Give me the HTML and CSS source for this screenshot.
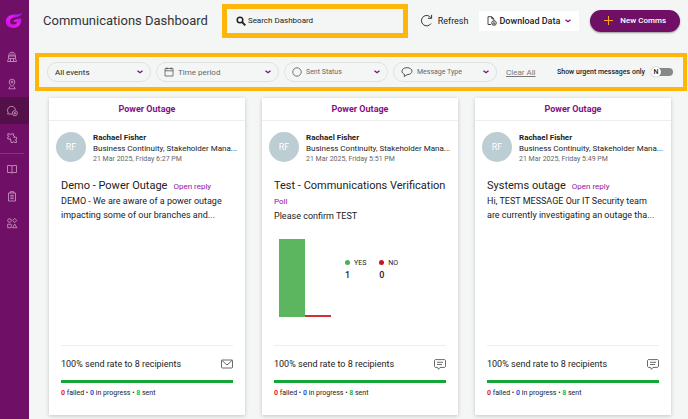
FILE: index.html
```html
<!DOCTYPE html>
<html lang="en">

<head>
  <meta charset="UTF-8" />
  <meta name="viewport" content="width=device-width, initial-scale=1.0" />
  <title>Communications Dashboard</title>
  <link rel="stylesheet" href="styles.css">
</head>

<body>
  <nav class="sidebar" aria-label="Main">
    <a class="logo" href="#" aria-label="Home">
      <svg width="18" height="18" viewBox="0 0 18 18">
        <defs>
          <linearGradient id="logoFill" x1="0" y1="1" x2="1" y2="0">
            <stop offset="0" stop-color="#c410dc" />
            <stop offset=".5" stop-color="#f016f6" />
            <stop offset="1" stop-color="#7a1bd0" />
          </linearGradient>
        </defs>
        <path fill="url(#logoFill)"
          d="M17 .800C16.800 3.600 15 4.800 11.500 5C7.500 5.200 5 7 5 9.500C5 11.500 6.500 12.600 8.500 12.600C10.500 12.600 11.800 11.600 12.200 10L8.300 9.800C9 7.800 11 6.800 16.500 6.600C16.500 12.500 13.500 16 8.500 16C4 16 .800 13.500 .800 9.800C.800 5.500 4 3 9 2.600C12 2.400 15 2.200 17 .800Z" />
      </svg>
    </a>
    <a class="nav-item" href="#" aria-label="Organisation">
      <svg viewBox="0 0 12 12"><path d="M3 5V3.500C3 .500 9 .500 9 3.500V5M2 5h8M3 7.500h6M1.500 10.500h9M2.500 5v2.500l-1 3M9.500 5v2.500l1 3M5 2.500v2.500M7 2.500v2.500M4.500 7.500v3M7.500 7.500v3" /></svg>
    </a>
    <a class="nav-item" href="#" aria-label="Locations">
      <svg viewBox="0 0 12 12"><path d="M6 8.500C4 6.500 3.200 5.300 3.200 4A2.800 2.800 0 0 1 8.800 4C8.800 5.300 8 6.500 6 8.500ZM4 8.500L2.800 10.800H9.200L8 8.500" /><circle cx="6" cy="4" r="1" /></svg>
    </a>
    <a class="nav-item active" href="#" aria-label="Communications">
      <svg viewBox="0 0 12 12"><path d="M6 9H1.500L2.200 7.600A4 4 0 1 1 9.500 5" /><circle cx="8.800" cy="8.200" r="2.500" /><path d="M8.800 7v2.400M7.600 8.200H10" /></svg>
    </a>
    <a class="nav-item" href="#" aria-label="Integrations">
      <svg viewBox="0 0 12 12"><path d="M1.800 1.800H4C3.700 3.200 5.800 3.200 5.500 1.800H7.500V4C8.900 3.700 8.900 5.500 7.700 5.300H10.500V7.300C9.100 7 9.100 9 10.500 8.700V10.500H8.500C8.800 9.200 6.800 9.200 7 10.500H5V8.300C3.700 8.600 3.700 6.800 5 7H1.800V5C3.200 5.300 3.200 3.500 1.800 3.800Z" /></svg>
    </a>
    <hr class="nav-divider">
    <a class="nav-item" href="#" aria-label="Guides">
      <svg viewBox="0 0 12 12"><path d="M1.500 2.500H5L6 3L7 2.500h3.500v7H7L6 10L5 9.500H1.500ZM6 3v7" /></svg>
    </a>
    <a class="nav-item" href="#" aria-label="Tasks">
      <svg viewBox="0 0 12 12"><path d="M2.500 3h7v8h-7ZM4.200 3V1.700h3.600V3M4.200 5.300h3.600M4.200 7h3.600M4.200 8.700h3.600" /></svg>
    </a>
    <a class="nav-item" href="#" aria-label="Categories">
      <svg viewBox="0 0 12 12"><circle cx="3.500" cy="3.500" r="1.800" /><path d="M8.700 1.300l2 2.200l-2 2.200l-2-2.200ZM1.700 7.200h3.500v3.500H1.700ZM8.700 7l2.200 3.700H6.500Z" /></svg>
    </a>
  </nav>

  <main class="main">
    <header class="topbar">
      <h1>Communications Dashboard</h1>
      <label class="search">
        <svg width="10" height="10" viewBox="0 0 10 10" fill="none" stroke="#222"><circle cx="4" cy="4" r="2.800" stroke-width="1.500" /><path d="M6 6l3.300 3.300" stroke-width="1.900" /></svg>
        <input type="text" placeholder="Search Dashboard" aria-label="Search Dashboard">
      </label>
      <button class="refresh" type="button">
        <svg width="13" height="13" viewBox="0 0 13 13" fill="none" stroke="#333"><path d="M11 9.500A5.200 5.200 0 1 1 11 3.800M11.600 .800V4.300H8" /></svg>
        Refresh
      </button>
      <button class="download" type="button">
        <svg width="10" height="10" viewBox="0 0 10 10" fill="none" stroke="#333" stroke-width=".9"><path d="M4 8.500H1V.700H4.700L6.800 2.700V4.200M4.700 .700V2.700H6.800" /><circle cx="7" cy="7" r="2.300" /><path d="M7 5.500V8.300M6 7.300L7 8.300L8 7.300" /></svg>
        Download Data
        <svg class="chevron" width="6" height="4" viewBox="0 0 6 4"><path d="M.500 .700L3 2.700L5.500 .700" /></svg>
      </button>
      <button class="new-comms" type="button">
        <svg width="9" height="9" viewBox="0 0 9 9" stroke="#f5a623"><path d="M4.500 0v9M0 4.500h9" /></svg>
        New Comms
      </button>
    </header>

    <section class="filters" aria-label="Filters">
      <label class="filter dark">
        <select aria-label="Events"><option>All events</option></select>
        <svg class="chevron" width="6" height="4" viewBox="0 0 6 4"><path d="M.500 .700L3 2.700L5.500 .700" /></svg>
      </label>
      <label class="filter wide">
        <svg width="10" height="10" viewBox="0 0 10 10" fill="none" stroke="#555" stroke-width=".8"><path d="M1 1.500H9V9H1ZM1 3.800H9M3 .300V2.500M7 .300V2.500" /></svg>
        <select aria-label="Time period"><option>Time period</option></select>
        <svg class="chevron" width="6" height="4" viewBox="0 0 6 4"><path d="M.500 .700L3 2.700L5.500 .700" /></svg>
      </label>
      <label class="filter small">
        <svg width="10" height="10" viewBox="0 0 10 10" fill="none" stroke="#555" stroke-width=".8"><circle cx="5" cy="5" r="4.200" /></svg>
        <select aria-label="Sent status"><option>Sent Status</option></select>
        <svg class="chevron" width="6" height="4" viewBox="0 0 6 4"><path d="M.500 .700L3 2.700L5.500 .700" /></svg>
      </label>
      <label class="filter small">
        <svg width="12" height="10" viewBox="0 0 12 10" fill="none" stroke="#444" stroke-width=".9"><path d="M3.500 7.300C-.500 5.800 .200 .700 6 .700C12.500 .700 12.800 7.500 6 7.700L3.200 9.500Z" /></svg>
        <select aria-label="Message type"><option>Message Type</option></select>
        <svg class="chevron" width="6" height="4" viewBox="0 0 6 4"><path d="M.500 .700L3 2.700L5.500 .700" /></svg>
      </label>
      <a class="clear" href="#">Clear All</a>
      <label class="urgent">
        Show urgent messages only
        <span class="switch">
          <input type="checkbox">
          <span class="knob">N</span>
        </span>
      </label>
    </section>

    <section class="cards">
      <article class="card">
        <h2>Power Outage</h2>
        <div class="sender">
          <div class="avatar">RF</div>
          <div class="sender-info">
            <strong>Rachael Fisher</strong>
            <span class="team">Business Continuity, Stakeholder Mana...</span>
            <time>21 Mar 2025, Friday 6:27 PM</time>
          </div>
        </div>
        <div class="message">
          <h3>Demo - Power Outage <span class="tag">Open reply</span></h3>
          <p>DEMO - We are aware of a power outage impacting some of our branches and...</p>
        </div>
        <footer>
          <div class="rate">
            100% send rate to 8 recipients
            <svg width="12" height="10" viewBox="0 0 12 10" fill="none" stroke="#444" stroke-width=".8"><rect x=".500" y="1" width="11" height="8" rx=".800" /><path d="M.800 1.300L6 6L11.200 1.300" /></svg>
          </div>
          <div class="progress"><div style="width: 100%"></div></div>
          <div class="counts"><b class="failed">0</b> failed • <b class="pending">0</b> in progress • <b class="sent">8</b> sent</div>
        </footer>
      </article>

      <article class="card">
        <h2>Power Outage</h2>
        <div class="sender">
          <div class="avatar">RF</div>
          <div class="sender-info">
            <strong>Rachael Fisher</strong>
            <span class="team">Business Continuity, Stakeholder Mana...</span>
            <time>21 Mar 2025, Friday 5:51 PM</time>
          </div>
        </div>
        <div class="message">
          <h3>Test - Communications Verification <span class="tag">Poll</span></h3>
          <p>Please confirm TEST</p>
        </div>
        <div class="poll">
          <div class="chart">
            <div class="bar yes" style="height: 100%"></div>
            <div class="bar no" style="height: 0%"></div>
          </div>
          <dl>
            <div><dt class="yes">YES</dt><dd>1</dd></div>
            <div><dt class="no">NO</dt><dd>0</dd></div>
          </dl>
        </div>
        <footer>
          <div class="rate">
            100% send rate to 8 recipients
            <svg width="12" height="11" viewBox="0 0 12 11" fill="none" stroke="#444" stroke-width=".8"><path d="M1.300 .600H10.700L11.500 1.400V7.600L10.700 8.400H6L4.500 10.300L3.500 8.400H1.300L.500 7.600V1.400ZM3 3.300H9M3 5.500H8" /></svg>
          </div>
          <div class="progress"><div style="width: 100%"></div></div>
          <div class="counts"><b class="failed">0</b> failed • <b class="pending">0</b> in progress • <b class="sent">8</b> sent</div>
        </footer>
      </article>

      <article class="card">
        <h2>Power Outage</h2>
        <div class="sender">
          <div class="avatar">RF</div>
          <div class="sender-info">
            <strong>Rachael Fisher</strong>
            <span class="team">Business Continuity, Stakeholder Mana...</span>
            <time>21 Mar 2025, Friday 5:49 PM</time>
          </div>
        </div>
        <div class="message">
          <h3>Systems outage <span class="tag">Open reply</span></h3>
          <p>Hi, TEST MESSAGE Our IT Security team are currently investigating an outage tha...</p>
        </div>
        <footer>
          <div class="rate">
            100% send rate to 8 recipients
            <svg width="12" height="11" viewBox="0 0 12 11" fill="none" stroke="#444" stroke-width=".8"><path d="M1.300 .600H10.700L11.500 1.400V7.600L10.700 8.400H6L4.500 10.300L3.500 8.400H1.300L.500 7.600V1.400ZM3 3.300H9M3 5.500H8" /></svg>
          </div>
          <div class="progress"><div style="width: 100%"></div></div>
          <div class="counts"><b class="failed">0</b> failed • <b class="pending">0</b> in progress • <b class="sent">8</b> sent</div>
        </footer>
      </article>
    </section>
  </main>
</body>

</html>
```
FILE: styles.css
```css
* {
  box-sizing: border-box;
}

body {
  font-family: Roboto, "Liberation Sans", sans-serif;
  font-size: 8px;
  background-color: #f4f6f6;
  color: #222;
  display: flex;
  min-height: 100vh;
  margin: 0;
}

h1, h2, h3, p, dl, dd {
  margin: 0;
}

button {
  font: inherit;
  color: inherit;
  display: flex;
  align-items: center;
  border: none;
  background: none;
  padding: 0;
  cursor: pointer;
  white-space: nowrap;
}

svg {
  flex: none;
}

.sidebar {
  flex: none;
  width: 29px;
  background-color: #6f0f66;
  display: flex;
  flex-direction: column;
}

.logo {
  height: 43px;
  padding: 12px 0 0 5px;
}

.nav-item {
  height: 27px;
  display: flex;
  align-items: center;
  padding-left: 6px;
}

.nav-item svg {
  width: 12px;
  height: 12px;
  fill: none;
  stroke: #cf9fca;
  stroke-width: .8;
}

.nav-item.active {
  background-color: #541049;
}

.nav-divider {
  width: 24px;
  margin: 2px 0 1px;
  border: none;
  border-top: 1px solid #85347e;
}

.main {
  flex: 1;
  min-width: 0;
}

.topbar {
  display: flex;
  align-items: center;
  height: 41px;
  padding: 0 8px 0 14px;
}

h1 {
  font-size: 13px;
  font-weight: normal;
  color: #333;
  white-space: nowrap;
}

.search {
  flex: 1;
  height: 34px;
  margin: 0 12px 0 14px;
  padding: 0 9px;
  border: 5px solid #ffb60a;
  display: flex;
  align-items: center;
  gap: 2px;
}

.search input {
  flex: 1;
  min-width: 0;
  font: inherit;
  border: none;
  background: none;
  padding: 0;
  outline: none;
}

.search input::placeholder {
  color: #222;
}

.refresh {
  font-size: 9px;
  gap: 5px;
}

.download {
  font-size: 9px;
  font-weight: 500;
  height: 20px;
  margin: 0 11px;
  padding: 0 8px;
  gap: 2px;
  background-color: #fff;
}

.download .chevron {
  margin-left: 3px;
}

.chevron {
  fill: none;
  stroke: #7b0f7b;
  stroke-width: 1.4;
}

.new-comms {
  height: 22px;
  padding: 0 14px;
  gap: 7px;
  border-radius: 11px;
  background-color: #6f0f66;
  color: #fff;
  font-weight: 500;
  box-shadow: 0 1px 2px rgba(0, 0, 0, .4);
}

.filters {
  display: flex;
  align-items: center;
  height: 38px;
  margin: 12px 1px 0 6px;
  padding: 0 10px 0 8px;
  border: 4px solid #ffb60a;
  white-space: nowrap;
}

.filter {
  flex: 0 1 104px;
  min-width: 0;
  height: 20px;
  margin-right: 5px;
  padding: 0 7px;
  border: 1px solid #dfe1e1;
  border-radius: 10px;
  display: flex;
  align-items: center;
  gap: 4px;
  color: #666;
}

.filter.wide {
  flex-basis: 123px;
}

.filter.dark {
  color: #222;
}

.filter.small {
  font-size: 7px;
}

.filter select {
  flex: 1;
  min-width: 0;
  font: inherit;
  color: inherit;
  appearance: none;
  border: none;
  background: none;
  padding: 0;
}

.clear {
  margin-left: 4px;
  color: #777;
}

.urgent {
  margin-left: auto;
  display: flex;
  align-items: center;
  gap: 6px;
  font-size: 7px;
  font-weight: 500;
}

.switch {
  position: relative;
  width: 22px;
  height: 10px;
}

.switch input {
  appearance: none;
  display: block;
  width: 20px;
  height: 8px;
  margin: 1px 0 0 2px;
  border-radius: 4px;
  background-color: #888;
}

.knob {
  position: absolute;
  top: 0;
  left: 0;
  width: 10px;
  height: 10px;
  border-radius: 50%;
  background-color: #fff;
  box-shadow: 0 0 1px rgba(0, 0, 0, .5);
  line-height: 10px;
  text-align: center;
}

.cards {
  display: grid;
  grid-template-columns: repeat(3, minmax(0, 1fr));
  gap: 17px;
  padding: 7px 17px 4px 20px;
}

.card {
  min-height: 317px;
  background-color: #fff;
  box-shadow: 0 1px 4px rgba(0, 0, 0, .2);
  display: flex;
  flex-direction: column;
}

.card h2 {
  height: 23px;
  border-bottom: 1px solid #eee;
  font-size: 9px;
  line-height: 22px;
  font-weight: bold;
  text-align: center;
  color: #850f86;
}

.sender {
  display: flex;
  gap: 7px;
  padding: 11px 7px 0;
}

.avatar {
  flex: none;
  width: 30px;
  height: 30px;
  border-radius: 50%;
  background-color: #bccdd3;
  color: #fff;
  font-size: 9px;
  line-height: 30px;
  text-align: center;
}

.sender-info {
  min-width: 0;
  display: flex;
  flex-direction: column;
  line-height: 11px;
}

.team {
  overflow: hidden;
  text-overflow: ellipsis;
  white-space: nowrap;
}

.sender-info time {
  font-size: 7px;
  line-height: 10px;
  color: #666;
}

.message {
  padding: 14px 12px 0;
}

.message h3 {
  display: flex;
  flex-wrap: wrap;
  align-items: baseline;
  column-gap: 6px;
  font-size: 11px;
  font-weight: normal;
  line-height: 16px;
}

.tag {
  font-size: 8px;
  line-height: 15px;
  color: #9413a0;
}

.message p {
  font-size: 9px;
  line-height: 14px;
}

.poll {
  display: flex;
  padding: 16px 17px 0;
}

.chart {
  display: flex;
  align-items: flex-end;
  width: 52px;
  height: 78px;
}

.bar {
  flex: 1;
  min-height: 2px;
}

.bar.yes {
  background-color: #5cb660;
}

.bar.no {
  background-color: #cf3035;
}

.poll dl {
  display: flex;
  gap: 13px;
  padding: 18px 0 0 14px;
}

.poll dt {
  font-size: 7px;
  line-height: 12px;
}

.poll dt::before {
  content: "";
  display: inline-block;
  width: 5px;
  height: 5px;
  margin-right: 4px;
  border-radius: 50%;
}

.poll dt.yes::before {
  background-color: #4caf50;
}

.poll dt.no::before {
  background-color: #c4161c;
}

.poll dd {
  font-size: 9px;
  line-height: 13px;
  font-weight: 500;
}

.card footer {
  margin: auto 12px 0;
  padding-bottom: 16px;
  border-top: 1px solid #eee;
}

.rate {
  display: flex;
  align-items: center;
  justify-content: space-between;
  height: 34px;
  padding-top: 2px;
  font-size: 9px;
}

.progress {
  height: 3px;
  background-color: #ddd;
}

.progress div {
  height: 100%;
  background-color: #14a637;
}

.counts {
  margin-top: 4px;
  font-size: 7px;
  line-height: 12px;
}

.failed {
  color: #e0202c;
}

.pending {
  color: #2458e0;
}

.sent {
  color: #17b94a;
}
```
